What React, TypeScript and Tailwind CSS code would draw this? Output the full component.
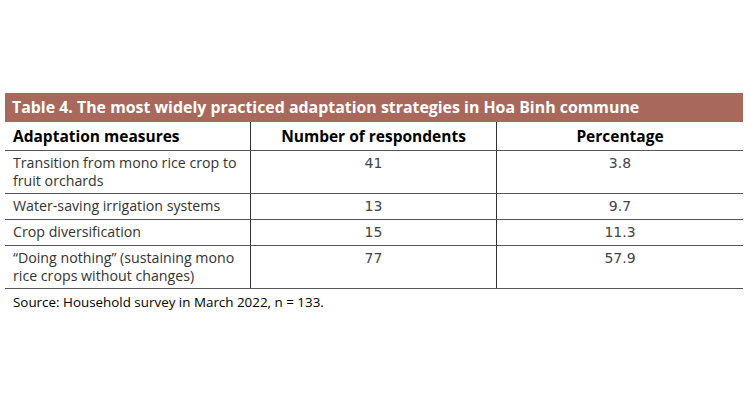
import React from "react";

const rows: { m: string[]; n: string; p: string }[] = [
  { m: ["Transition from mono rice crop to", "fruit orchards"], n: "41", p: "3.8" },
  { m: ["Water-saving irrigation systems"], n: "13", p: "9.7" },
  { m: ["Crop diversification"], n: "15", p: "11.3" },
  { m: ["\u201CDoing nothing\u201D (sustaining mono", "rice crops without changes)"], n: "77", p: "57.9" },
];

export default function App() {
  return (
    <div className="w-[750px] h-[400px] bg-white pt-[93px] pl-[5px] font-['Open_Sans',sans-serif]">
      <div className="w-[738px]">
        <div className="h-[29px] bg-[#a8695c] flex items-center pl-[7px] text-white font-bold text-[15.9px] leading-none">
          Table 4. The most widely practiced adaptation strategies in Hoa Binh commune
        </div>
        <div className="grid grid-cols-3 h-[29px] border-b border-[#555]">
          <div className="border-r border-[#333] flex items-center pl-[8px] pt-[2px] font-bold text-[15.5px] text-black">
            Adaptation measures
          </div>
          <div className="border-r border-[#333] flex items-center justify-center pt-[2px] font-bold text-[15.5px] text-black">
            Number of respondents
          </div>
          <div className="flex items-center justify-center pt-[2px] font-bold text-[15.5px] text-black">
            Percentage
          </div>
        </div>
        {rows.map((r, i) => (
          <div
            key={i}
            className={`grid grid-cols-3 border-b border-[#555] ${r.m.length > 1 ? "h-[43px]" : "h-[26px]"}`}
          >
            <div className="border-r border-[#333] pl-[8px] pt-[3px] text-[14.2px] leading-[18px] text-[#333]">
              {r.m.map((l, j) => (
                <div key={j}>{l}</div>
              ))}
            </div>
            <div className="border-r border-[#333] pt-[3px] text-center text-[14px] leading-[18px] text-[#444] font-['DejaVu_Sans',sans-serif]">
              {r.n}
            </div>
            <div className="pt-[3px] text-center text-[14px] leading-[18px] text-[#444] font-['DejaVu_Sans',sans-serif]">
              {r.p}
            </div>
          </div>
        ))}
        <div className="pl-[8px] pt-[4px] text-[13.4px] leading-[18px] text-black">
          Source: Household survey in March 2022, n = 133.
        </div>
      </div>
    </div>
  );
}
